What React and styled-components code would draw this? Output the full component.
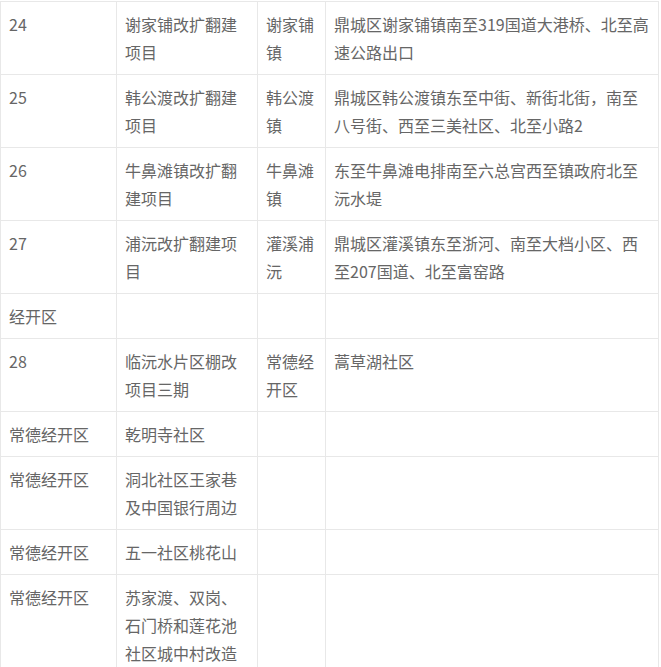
import React from "react";
import styled, { createGlobalStyle } from "styled-components";

const GlobalStyle = createGlobalStyle`
  body {
    margin: 0;
    background: #fff;
  }
`;

const Wrapper = styled.div`
  padding: 1px 0 0 0;
`;

const Table = styled.table`
  width: 658px;
  table-layout: fixed;
  border-collapse: collapse;
  font-family: "Noto Sans CJK SC", "Microsoft YaHei", sans-serif;
  font-size: 16px;
  line-height: 28px;
  color: #666;
`;

const Col = styled.col`
  width: ${(props) => props.w}px;
`;

const Cell = styled.td`
  border: 1px solid #e8e8e8;
  padding: 8px;
  vertical-align: top;
  word-break: break-all;
`;

const widths = [116, 141, 68, 333];

const rows = [
  ["24", "谢家铺改扩翻建项目", "谢家铺镇", "鼎城区谢家铺镇南至319国道大港桥、北至高速公路出口"],
  ["25", "韩公渡改扩翻建项目", "韩公渡镇", "鼎城区韩公渡镇东至中街、新街北街，南至八号街、西至三美社区、北至小路2"],
  ["26", "牛鼻滩镇改扩翻建项目", "牛鼻滩镇", "东至牛鼻滩电排南至六总宫西至镇政府北至沅水堤"],
  ["27", "浦沅改扩翻建项目", "灌溪浦沅", "鼎城区灌溪镇东至浙河、南至大档小区、西至207国道、北至富窑路"],
  ["经开区", "", "", ""],
  ["28", "临沅水片区棚改项目三期", "常德经开区", "蒿草湖社区"],
  ["常德经开区", "乾明寺社区", "", ""],
  ["常德经开区", "洞北社区王家巷及中国银行周边", "", ""],
  ["常德经开区", "五一社区桃花山", "", ""],
  ["常德经开区", "苏家渡、双岗、石门桥和莲花池社区城中村改造", "", ""],
];

const App = () => {
  return (
    <>
      <GlobalStyle />
      <Wrapper>
        <Table>
          <colgroup>
            {widths.map((w, i) => (
              <Col key={i} w={w} />
            ))}
          </colgroup>
          <tbody>
            {rows.map((row, i) => (
              <tr key={i}>
                {row.map((text, j) => (
                  <Cell key={j}>{text}</Cell>
                ))}
              </tr>
            ))}
          </tbody>
        </Table>
      </Wrapper>
    </>
  );
};

export default App;
